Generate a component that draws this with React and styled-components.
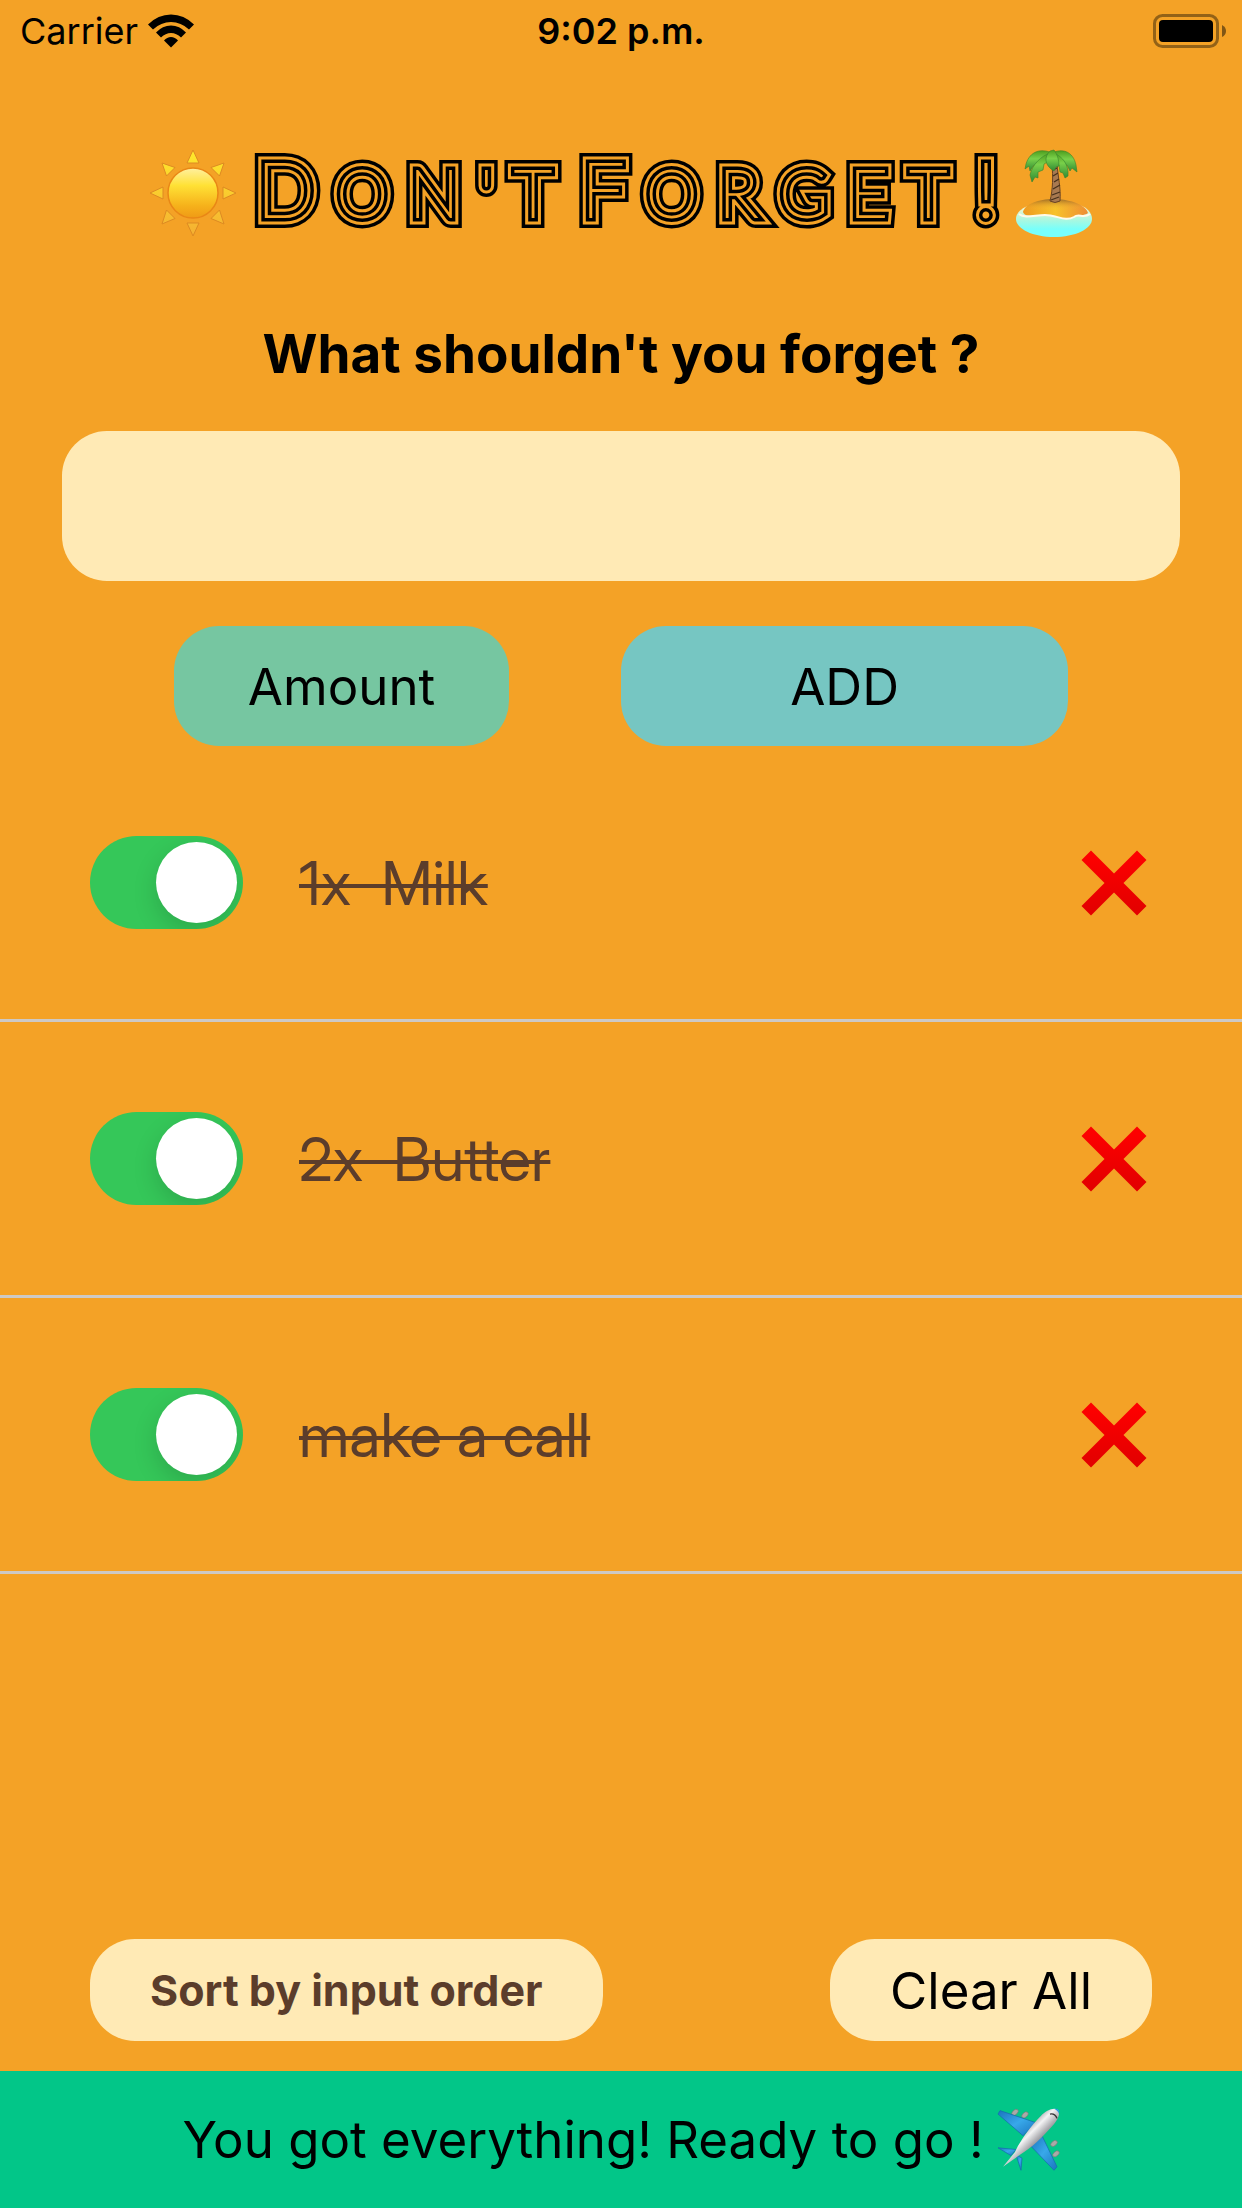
import React, { useState } from "react";
import styled, { createGlobalStyle } from "styled-components";

const orange = "#f4a226";
const cream = "#ffeab5";
const brown = "#5b3d2b";

const GlobalStyle = createGlobalStyle`
  *, *::before, *::after { box-sizing: border-box; }
  body {
    margin: 0;
    background: ${orange};
    color: #000;
    font-family: Inter, "Liberation Sans", sans-serif;
  }
  button, input { font-family: inherit; color: inherit; }
`;

const Screen = styled.div`
  min-height: 100vh;
  display: flex;
  flex-direction: column;
  background: ${orange};
`;

const StatusBar = styled.header`
  display: grid;
  grid-template-columns: 1fr auto 1fr;
  align-items: center;
  height: 62px;
  padding: 0 16px;
  font-size: 36px;
  line-height: 62px;
`;

const Carrier = styled.div`
  display: flex;
  align-items: center;
  padding-left: 4px;
  gap: 10px;
`;

const Clock = styled.time`
  font-weight: 600;
`;

const Battery = styled.svg`
  justify-self: end;
`;

const TitleRow = styled.div`
  display: flex;
  justify-content: center;
  align-items: center;
  height: 120px;
  margin-top: 71px;
  gap: 10px;
`;

const Title = styled.h1`
  display: flex;
  align-items: baseline;
  margin: 0;
  gap: 10px;
  font-family: Lato, "Liberation Sans", sans-serif;
  font-weight: 100;
  line-height: 80px;
  padding-bottom: 6px;
`;

const Word = styled.span`
  display: flex;
  align-items: baseline;
  gap: 2px;
`;

/* Each letter is four stacked strokes, widest at the back: black, orange, black, orange. */
const Letter = styled.span`
  position: relative;
  display: block;
  padding: 0 10px;
  font-size: ${(p) => (p.$cap ? 76 : 65)}px;

  &::before {
    content: attr(data-letter);
    position: absolute;
    left: 10px;
    top: 0;
    -webkit-text-stroke: 22px #000;
  }
`;

const Core = styled.span`
  position: relative;
  display: block;
  -webkit-text-stroke: 15px ${orange};

  &::before,
  &::after {
    content: attr(data-letter);
    position: absolute;
    left: 0;
    top: 0;
  }
  &::before {
    -webkit-text-stroke: 9px #000;
  }
  &::after {
    color: ${orange};
    -webkit-text-stroke: 2px ${orange};
  }
`;

const Form = styled.form`
  display: flex;
  flex-direction: column;
`;

const Question = styled.label`
  margin-top: 61px;
  text-align: center;
  font-size: 53px;
  font-weight: 700;
  line-height: 80px;
`;

const TextBox = styled.input`
  height: 150px;
  margin: 37px 62px 0;
  padding: 0 40px;
  border: 0;
  border-radius: 45px;
  background: ${cream};
  font-size: 53px;
`;

const FormActions = styled.div`
  display: flex;
  margin: 45px 174px 0;
  gap: 112px;
`;

const AmountBox = styled.input`
  flex: 3 1 0;
  min-width: 0;
  height: 120px;
  padding: 0;
  border: 0;
  border-radius: 45px;
  background: #76c6a1;
  font-size: 51px;
  text-align: center;
  &::placeholder { color: #000; opacity: 1; }
`;

const AddButton = styled.button`
  flex: 4 1 0;
  height: 120px;
  padding: 0;
  border: 0;
  border-radius: 45px;
  background: #76c6c2;
  font-size: 51px;
`;

const List = styled.ul`
  flex: 1;
  margin: 0;
  padding: 0;
  list-style: none;
`;

const Item = styled.li`
  display: flex;
  align-items: center;
  height: 276px;
  padding: 0 90px;
  border-bottom: 3px solid #cdc9c5;
`;

const Switch = styled.input`
  appearance: none;
  flex: none;
  display: flex;
  align-items: center;
  width: 153px;
  height: 93px;
  margin: 0 56px 0 0;
  padding: 6px;
  border-radius: 47px;
  overflow: hidden;
  background: #e9e9ea;

  &::before {
    content: "";
    width: 81px;
    height: 81px;
    border-radius: 50%;
    background: #fff;
    box-shadow: 0 9px 24px rgba(0, 0, 0, 0.15);
  }
  &:checked {
    justify-content: flex-end;
    background: #35c759;
  }
`;

const ItemText = styled.label`
  flex: 1;
  color: ${brown};
  font-family: "Inter Display", Inter, "Liberation Sans", sans-serif;
  font-size: 60px;
  line-height: 72px;
  white-space: pre;
  text-decoration: ${(p) => (p.$done ? "line-through" : "none")};
  text-decoration-thickness: 4px;
`;

const RemoveButton = styled.button`
  display: flex;
  padding: 5px;
  border: 0;
  background: none;
`;

const ListActions = styled.div`
  display: flex;
  justify-content: space-between;
  padding: 0 90px 30px;
`;

const Pill = styled.button`
  height: 102px;
  padding: 0 60px;
  border: 0;
  border-radius: 45px;
  background: ${cream};
  color: ${(p) => (p.$strong ? brown : "#000")};
  font-size: ${(p) => (p.$strong ? 43 : 51)}px;
  font-weight: ${(p) => (p.$strong ? 700 : 400)};
`;

const Footer = styled.footer`
  display: flex;
  justify-content: center;
  align-items: center;
  height: 137px;
  gap: 12px;
  background: #02c688;
  font-size: 51px;
  line-height: 64px;
`;

const WifiIcon = () => (
  <svg width="46" height="34" viewBox="0 0 46 34" aria-hidden="true">
    <path d="M0 10.5Q10 0.5 23 0.5T46 10.5L41 15.5Q33 8 23 8T5 15.5Z" />
    <path d="M8 18.5Q14.500 11.500 23 11.500T38 18.500L33 23.500Q28.500 19 23 19T13 23.500Z" />
    <path d="M16 26.500Q19 23 23 23T30 26.500L23 33.500Z" />
  </svg>
);

const BatteryIcon = () => (
  <Battery width="73" height="34" viewBox="0 0 73 34" role="img" aria-label="Battery full">
    <rect x="1.500" y="1.500" width="63" height="31" rx="8" fill="none" stroke="#936217" strokeWidth="3" />
    <rect x="6" y="6" width="54" height="22" rx="4" />
    <path d="M69 11Q73 13 73 17T69 23Z" fill="#805615" />
  </Battery>
);

const SunIcon = () => (
  <svg width="88" height="90" viewBox="0 0 88 90" aria-hidden="true">
    <defs>
      <linearGradient id="sunDisc" x1="0" y1="0" x2="0" y2="1">
        <stop offset="0" stopColor="#fff0a0" />
        <stop offset=".35" stopColor="#ffe135" />
        <stop offset=".75" stopColor="#f6b21b" />
        <stop offset="1" stopColor="#ef9a16" />
      </linearGradient>
      <linearGradient id="sunRays" gradientUnits="userSpaceOnUse" x1="0" y1="0" x2="0" y2="90">
        <stop offset="0" stopColor="#ffea2b" />
        <stop offset="1" stopColor="#f4ae32" />
      </linearGradient>
    </defs>
    <g fill="url(#sunRays)" stroke="#dd8a22" strokeWidth="1" strokeLinejoin="round">
      <path d="M44 2L50 15H38Z" />
      <path d="M75 15L70.500 28L62 19.500Z" />
      <path d="M87 45L74 51V39Z" />
      <path d="M75 76L62 70.500L70.500 62Z" />
      <path d="M44 88L38 75H50Z" />
      <path d="M13 76L17.500 62L26 70.500Z" />
      <path d="M1 45L14 39V51Z" />
      <path d="M13 15L26 19.500L17.500 28Z" />
    </g>
    <circle cx="44" cy="45" r="25" fill="url(#sunDisc)" stroke="#e98716" strokeWidth="1.500" />
  </svg>
);

const IslandIcon = () => (
  <svg width="78" height="90" viewBox="0 0 78 90" aria-hidden="true">
    <defs>
      <linearGradient id="sand" x1="0" y1="0" x2="1" y2="0">
        <stop offset="0" stopColor="#ef9a20" />
        <stop offset=".5" stopColor="#f7c22b" />
        <stop offset="1" stopColor="#ee8d34" />
      </linearGradient>
      <linearGradient id="sandShade" x1="0" y1="0" x2="0" y2="1">
        <stop offset="0" stopColor="#8a5a25" stopOpacity=".8" />
        <stop offset=".5" stopColor="#f3b030" stopOpacity="0" />
      </linearGradient>
      <linearGradient id="sea" x1="0" y1="0" x2="0" y2="1">
        <stop offset="0" stopColor="#fff5cf" />
        <stop offset=".5" stopColor="#a5f8e2" />
        <stop offset=".75" stopColor="#78fffb" />
      </linearGradient>
      <linearGradient id="leaf" x1="0" y1="0" x2="0" y2="1">
        <stop offset="0" stopColor="#4d9d1d" />
        <stop offset=".4" stopColor="#79d04a" />
        <stop offset="1" stopColor="#2f8a34" />
      </linearGradient>
    </defs>
    <path d="M1 71C1 64 8 59 16 57H64C72 59 77 65 77 71C77 81 60 89 39 89S1 81 1 71Z" fill="url(#sea)" />
    <path d="M8 64C10 56 24 51 38 51C55 51 71 57 73 65C68 69 64 65 59 69C50 74 42 67 30 67C20 67 10 70 8 64Z" fill="url(#sand)" />
    <path d="M8 64C10 56 24 51 38 51C55 51 71 57 73 65C68 69 64 65 59 69C50 74 42 67 30 67C20 67 10 70 8 64Z" fill="url(#sandShade)" />
    <path d="M4 66C10 71 20 67 30 67C42 67 50 74 59 69C64 65 68 71 75 66" fill="none" stroke="#fffbea" strokeWidth="2" />
    <path d="M37 17L42 16C43 29 46 40 45 53Q40 56 35 53C38 41 38 28 37 17Z" fill="#a87950" stroke="#694323" strokeWidth="1" />
    <path d="M38 22L42 20M38 28L43 25M39 34L44 31M38 41L45 37M37 47L45 44M36 52L44 49" stroke="#45301c" strokeWidth="1.300" />
    <g fill="url(#leaf)" stroke="#37852b" strokeWidth=".6" strokeLinejoin="round">
      <path d="M37 5C26 0 15 3 11 16L10 21L14 18L15 23L19 17L22 18L25 13L29 14Z" />
      <path d="M37 5C47 0 58 3 61 17L62 24L57 20L55 23L52 17L48 18L46 12Z" />
      <path d="M35 5C26 8 17 17 15 27L17 34L20 29L23 30L23 24L28 22L29 16L36 12Z" />
      <path d="M39 5C48 9 54 17 53 28L50 30L48 25L45 24L44 17L39 12Z" />
      <path d="M35 3C29 9 30 16 36 21L39 23L41 19L44 18C44 11 42 6 39 2Z" />
    </g>
  </svg>
);

const CrossIcon = () => (
  <svg width="66" height="66" viewBox="0 0 66 66" aria-hidden="true">
    <defs>
      <linearGradient id="cross" x1="0" y1="0" x2="0" y2="1">
        <stop offset=".1" stopColor="#fd0000" />
        <stop offset=".9" stopColor="#e40000" />
      </linearGradient>
    </defs>
    <path d="M10 0.500L33 23.500L56 0.500L65.500 10L42.500 33L65.500 56L56 65.500L33 42.500L10 65.500L0.500 56L23.500 33L0.500 10Z" fill="url(#cross)" />
  </svg>
);

const PlaneIcon = () => (
  <svg width="64" height="64" viewBox="0 0 64 74" preserveAspectRatio="none" aria-hidden="true">
    <defs>
      <linearGradient id="fuselage" gradientUnits="userSpaceOnUse" x1="32" y1="22" x2="46" y2="34">
        <stop offset="0" stopColor="#b5b5b8" />
        <stop offset=".35" stopColor="#f4f4f5" />
        <stop offset="1" stopColor="#96969b" />
      </linearGradient>
      <linearGradient id="wing" x1="0" y1="0" x2="1" y2="1">
        <stop offset="0" stopColor="#1a74bd" />
        <stop offset=".5" stopColor="#38a8ea" />
        <stop offset="1" stopColor="#1a74bd" />
      </linearGradient>
    </defs>
    <g fill="#aaa9a7" stroke="#777" strokeWidth=".6">
      <ellipse cx="19" cy="5" rx="2.500" ry="4" transform="rotate(38 19 5)" />
      <ellipse cx="29" cy="8" rx="2.500" ry="4" transform="rotate(38 29 8)" />
      <ellipse cx="58" cy="41" rx="2.500" ry="4" transform="rotate(42 58 41)" />
      <ellipse cx="60" cy="53" rx="2.500" ry="4" transform="rotate(42 60 53)" />
    </g>
    <g fill="url(#wing)" stroke="#176caf" strokeWidth=".8" strokeLinejoin="round">
      <path d="M4 3L40 17L27 32L2 7Z" />
      <path d="M46 32L61 68L58 72L34 43Z" />
      <path d="M2 46L20 48L15 55Z" />
      <path d="M20 54L26 58L25 72Z" />
    </g>
    <path d="M62 2C65 7 61 15 57 20C47 33 35 47 24 54L7 68L19 51C23 40 34 22 45 9C50 3 57 -1 62 2Z" fill="url(#fuselage)" />
    <path d="M58 1Q64 0 63 7Q62 3 58 1Z" fill="#2196e3" />
    <path d="M54 7Q59 6 61 12" fill="none" stroke="#333" strokeWidth="1.500" />
  </svg>
);

const titleWords = ["Don't", "Forget", "!"];

function StripedWord({ text }) {
  return (
    <Word>
      {text
        .toUpperCase()
        .split("")
        .map((char, i) => (
          <Letter key={i} $cap={i === 0} data-letter={char}>
            <Core data-letter={char}>{char}</Core>
          </Letter>
        ))}
    </Word>
  );
}

const initialItems = [
  { id: "milk", text: "1x  Milk", done: true },
  { id: "butter", text: "2x  Butter", done: true },
  { id: "call", text: "make a call", done: true },
];

export default function App() {
  const [items, setItems] = useState(initialItems);

  const toggle = (id) =>
    setItems(items.map((item) => (item.id === id ? { ...item, done: !item.done } : item)));
  const remove = (id) => setItems(items.filter((item) => item.id !== id));

  return (
    <Screen>
      <GlobalStyle />
      <StatusBar>
        <Carrier>
          Carrier
          <WifiIcon />
        </Carrier>
        <Clock>9:02 p.m.</Clock>
        <BatteryIcon />
      </StatusBar>

      <TitleRow>
        <SunIcon />
        <Title>
          {titleWords.map((word) => (
            <StripedWord key={word} text={word} />
          ))}
        </Title>
        <IslandIcon />
      </TitleRow>

      <Form onSubmit={(e) => e.preventDefault()}>
        <Question htmlFor="thing">What shouldn't you forget ?</Question>
        <TextBox id="thing" type="text" />
        <FormActions>
          <AmountBox type="text" placeholder="Amount" aria-label="Amount" />
          <AddButton type="submit">ADD</AddButton>
        </FormActions>
      </Form>

      <List>
        {items.map((item) => (
          <Item key={item.id}>
            <Switch
              id={item.id}
              type="checkbox"
              role="switch"
              checked={item.done}
              onChange={() => toggle(item.id)}
            />
            <ItemText htmlFor={item.id} $done={item.done}>
              {item.text}
            </ItemText>
            <RemoveButton type="button" aria-label="Remove" onClick={() => remove(item.id)}>
              <CrossIcon />
            </RemoveButton>
          </Item>
        ))}
      </List>

      <ListActions>
        <Pill type="button" $strong>
          Sort by input order
        </Pill>
        <Pill type="button" onClick={() => setItems([])}>
          Clear All
        </Pill>
      </ListActions>

      <Footer>
        You got everything! Ready to go !
        <PlaneIcon />
      </Footer>
    </Screen>
  );
}
